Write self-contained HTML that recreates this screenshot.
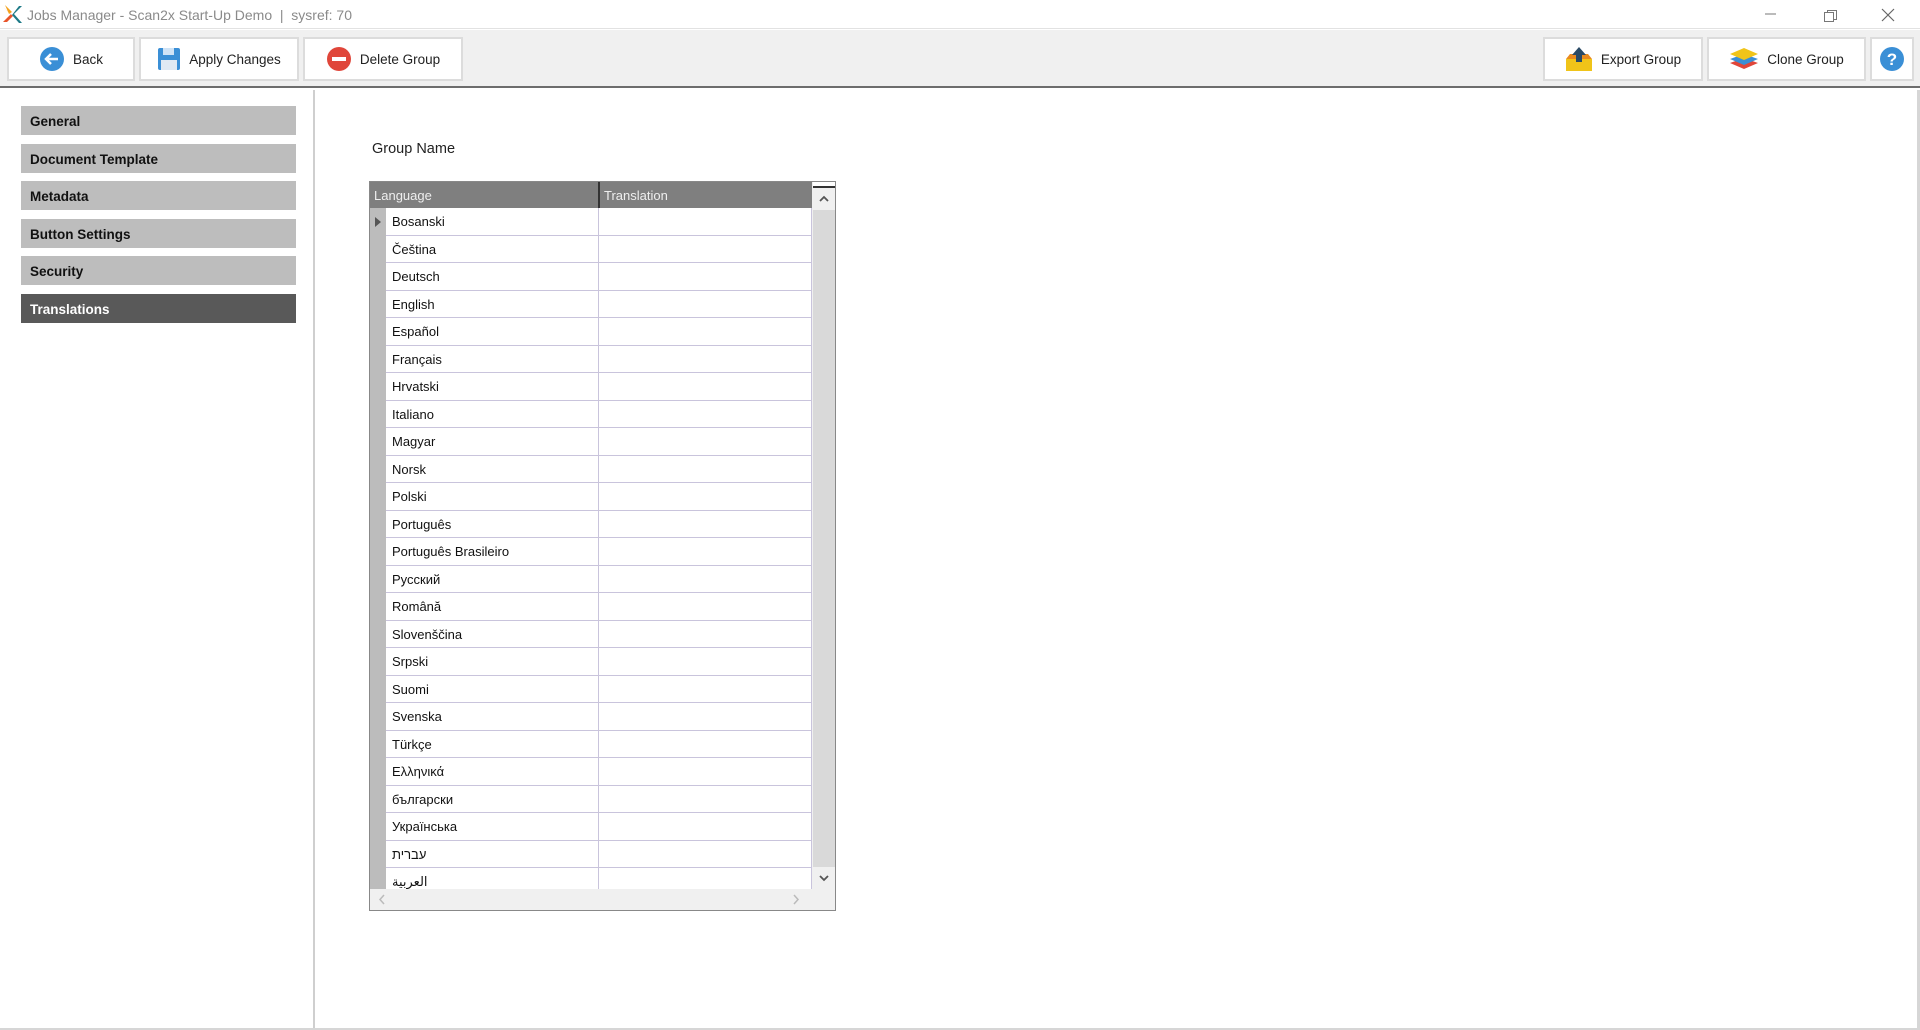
<!DOCTYPE html>
<html><head><meta charset="utf-8">
<style>
*{margin:0;padding:0;box-sizing:border-box}
body{width:1920px;height:1030px;background:#fff;font-family:"Liberation Sans","DejaVu Sans",sans-serif;position:relative;overflow:hidden}
.abs{position:absolute}
.title{left:0;top:0;width:1920px;height:29px;background:#fff;border-bottom:1px solid #e2e2e2}
.title span{position:absolute;left:27px;top:7px;font-size:14px;color:#8a8a8a}
.tb{left:0;top:30px;width:1920px;height:58px;background:#f0f0f0;border-bottom:2px solid #6d6d6d}
.btn{position:absolute;top:7px;height:44px;background:#fff;border:2px solid #dcdcdc;font-size:13.5px;color:#222;display:flex;align-items:center;justify-content:center;gap:8px}
.side{left:1px;top:90px;width:314px;height:939px;border-right:2px solid #cfcfcf;background:#fff}
.mi{position:absolute;left:20px;width:275px;height:29px;background:#bdbdbd;font-weight:bold;font-size:13.5px;color:#111;padding:8px 0 0 9px}
.content{left:316px;top:90px;width:1601px;height:938px;background:#fff}
.grid{left:369px;top:181px;width:467px;height:730px;border:1px solid #888;background:#f0f0f0}
.row{position:absolute;left:0;height:27.5px;width:442px}
.rh{position:absolute;left:0;top:0;width:16px;height:100%;background:#bcbcbc}
.c1{position:absolute;left:16px;top:0;width:213px;height:100%;background:#fff;border-bottom:1px solid #c9c4dc;border-right:1px solid #c9c4dc;font-size:13px;color:#111;padding:6px 0 0 6px;white-space:nowrap}
.c2{position:absolute;left:229px;top:0;width:213px;height:100%;background:#fff;border-bottom:1px solid #c9c4dc;border-right:1px solid #c9c4dc}
</style></head><body>
<div class="abs title">
<svg class="abs" style="left:3px;top:5px" width="20" height="19" viewBox="0 0 20 19"><path d="M0 2 L8 9 L0 17 L4 17 L10 11 Z" fill="#e8542a"/><path d="M2 0 L9 7 L6 9 Z" fill="#f4a21b"/><path d="M19 1 L11 9 L19 18 L16 18 L9 10 L16 1 Z" fill="#1d7a87"/></svg>
<span>Jobs Manager - Scan2x Start-Up Demo &nbsp;|&nbsp; sysref: 70</span>
<svg class="abs" style="left:1760px;top:8px" width="160" height="16"><path d="M5 6H16" stroke="#777" stroke-width="1"/><rect x="64.5" y="4.5" width="9" height="9" fill="none" stroke="#777"/><path d="M67.5 4.5V2.5H76.5V11.5H73.5" fill="none" stroke="#777"/><path d="M122 1L134 13M134 1L122 13" stroke="#666" stroke-width="1.2"/></svg>
</div>
<div class="abs tb">
<div class="btn" style="left:7px;width:128px"><svg width="26" height="26"><circle cx="13" cy="13" r="12" fill="#3a8fd6"/><path d="M19 13H8M12 8L7 13L12 18" stroke="#fff" stroke-width="2.5" fill="none"/></svg>Back</div>
<div class="btn" style="left:139px;width:160px"><svg width="24" height="24"><rect x="1" y="1" width="22" height="22" rx="2" fill="#3a8fd6"/><rect x="6" y="1" width="11" height="7" fill="#cfe3f6"/><rect x="4" y="13" width="16" height="10" fill="#dfe9f3"/></svg>Apply Changes</div>
<div class="btn" style="left:303px;width:160px"><svg width="26" height="26"><circle cx="13" cy="13" r="12" fill="#e0463a"/><rect x="6" y="11" width="14" height="4" fill="#fff"/></svg>Delete Group</div>
<div class="btn" style="left:1543px;width:160px"><svg width="28" height="26"><rect x="1" y="13" width="26" height="12" fill="#f0c419"/><path d="M1 13L5 8H23L27 13Z" fill="#e98a1e"/><path d="M14 1L21 9H17V16H11V9H7Z" fill="#2a4a66"/></svg>Export Group</div>
<div class="btn" style="left:1707px;width:159px"><svg width="30" height="24"><path d="M15 11L29 16L15 22L1 16Z" fill="#e0463a"/><path d="M15 7L29 12L15 18L1 12Z" fill="#3a8fd6"/><path d="M15 1L29 7L15 13L1 7Z" fill="#f0c419"/></svg>Clone Group</div>
<div class="btn" style="left:1870px;width:44px"><svg width="26" height="26"><circle cx="13" cy="13" r="12" fill="#3a8fd6"/><text x="13" y="19" text-anchor="middle" font-size="17" font-weight="bold" fill="#fff" font-family="Liberation Sans">?</text></svg></div>
</div>
<div class="abs side">
<div class="mi" style="top:16px">General</div>
<div class="mi" style="top:54px">Document Template</div>
<div class="mi" style="top:91px">Metadata</div>
<div class="mi" style="top:129px">Button Settings</div>
<div class="mi" style="top:166px">Security</div>
<div class="mi" style="top:204px;background:#595959;color:#fff">Translations</div>
</div>
<div class="abs content"></div>
<div class="abs" style="left:1917px;top:90px;width:3px;height:940px;background:#d6d6d6"></div>
<div class="abs" style="left:0;top:1028px;width:1920px;height:2px;background:#d6d6d6"></div>
<div class="abs" style="left:372px;top:141px;font-size:14.5px;color:#222">Group Name</div>
<div class="abs grid">
<div class="abs" style="left:0;top:0;width:442px;height:26px;background:#7f7f7f;color:#eee;font-size:13px">
<div class="abs" style="left:4px;top:6px">Language</div>
<div class="abs" style="left:228px;top:0;width:2px;height:26px;background:#333"></div>
<div class="abs" style="left:234px;top:6px">Translation</div>
</div>
<div class="abs" style="left:443px;top:0;width:22px;height:707px;background:#d9d9d9"></div>
<div class="abs" style="left:443px;top:0;width:22px;height:6px;background:#fff;border-bottom:2px solid #333"></div>
<div class="abs" style="left:443px;top:6px;width:22px;height:22px;background:#f0f0f0"><svg width="22" height="22"><path d="M7 13L11 9L15 13" stroke="#555" stroke-width="1.8" fill="none"/></svg></div>
<div class="abs" style="left:443px;top:685px;width:22px;height:22px;background:#f0f0f0"><svg width="22" height="22"><path d="M7 9L11 13L15 9" stroke="#555" stroke-width="1.8" fill="none"/></svg></div>
<div class="abs" style="left:0;top:707px;width:465px;height:21px;background:#f0f0f0"><svg class="abs" style="left:0;top:0" width="465" height="21"><path d="M14 6L10 10.5L14 15M424 6L428 10.5L424 15" stroke="#bbb" stroke-width="1.5" fill="none"/></svg></div>
<div class="abs" style="left:0;top:26px;width:442px;height:681px;overflow:hidden">
<div class="row" style="top:0"><div class="rh"><div class="abs" style="left:5px;top:9px;border-left:6px solid #555;border-top:5px solid transparent;border-bottom:5px solid transparent"></div></div><div class="c1">Bosanski</div><div class="c2"></div></div>
<div class="row" style="top:27.5px"><div class="rh"></div><div class="c1">Čeština</div><div class="c2"></div></div>
<div class="row" style="top:55px"><div class="rh"></div><div class="c1">Deutsch</div><div class="c2"></div></div>
<div class="row" style="top:82.5px"><div class="rh"></div><div class="c1">English</div><div class="c2"></div></div>
<div class="row" style="top:110px"><div class="rh"></div><div class="c1">Español</div><div class="c2"></div></div>
<div class="row" style="top:137.5px"><div class="rh"></div><div class="c1">Français</div><div class="c2"></div></div>
<div class="row" style="top:165px"><div class="rh"></div><div class="c1">Hrvatski</div><div class="c2"></div></div>
<div class="row" style="top:192.5px"><div class="rh"></div><div class="c1">Italiano</div><div class="c2"></div></div>
<div class="row" style="top:220px"><div class="rh"></div><div class="c1">Magyar</div><div class="c2"></div></div>
<div class="row" style="top:247.5px"><div class="rh"></div><div class="c1">Norsk</div><div class="c2"></div></div>
<div class="row" style="top:275px"><div class="rh"></div><div class="c1">Polski</div><div class="c2"></div></div>
<div class="row" style="top:302.5px"><div class="rh"></div><div class="c1">Português</div><div class="c2"></div></div>
<div class="row" style="top:330px"><div class="rh"></div><div class="c1">Português Brasileiro</div><div class="c2"></div></div>
<div class="row" style="top:357.5px"><div class="rh"></div><div class="c1">Русский</div><div class="c2"></div></div>
<div class="row" style="top:385px"><div class="rh"></div><div class="c1">Română</div><div class="c2"></div></div>
<div class="row" style="top:412.5px"><div class="rh"></div><div class="c1">Slovenščina</div><div class="c2"></div></div>
<div class="row" style="top:440px"><div class="rh"></div><div class="c1">Srpski</div><div class="c2"></div></div>
<div class="row" style="top:467.5px"><div class="rh"></div><div class="c1">Suomi</div><div class="c2"></div></div>
<div class="row" style="top:495px"><div class="rh"></div><div class="c1">Svenska</div><div class="c2"></div></div>
<div class="row" style="top:522.5px"><div class="rh"></div><div class="c1">Türkçe</div><div class="c2"></div></div>
<div class="row" style="top:550px"><div class="rh"></div><div class="c1">Ελληνικά</div><div class="c2"></div></div>
<div class="row" style="top:577.5px"><div class="rh"></div><div class="c1">български</div><div class="c2"></div></div>
<div class="row" style="top:605px"><div class="rh"></div><div class="c1">Українська</div><div class="c2"></div></div>
<div class="row" style="top:632.5px"><div class="rh"></div><div class="c1">עברית</div><div class="c2"></div></div>
<div class="row" style="top:660px"><div class="rh"></div><div class="c1">العربية</div><div class="c2"></div></div>
</div>
</div>
</body></html>
